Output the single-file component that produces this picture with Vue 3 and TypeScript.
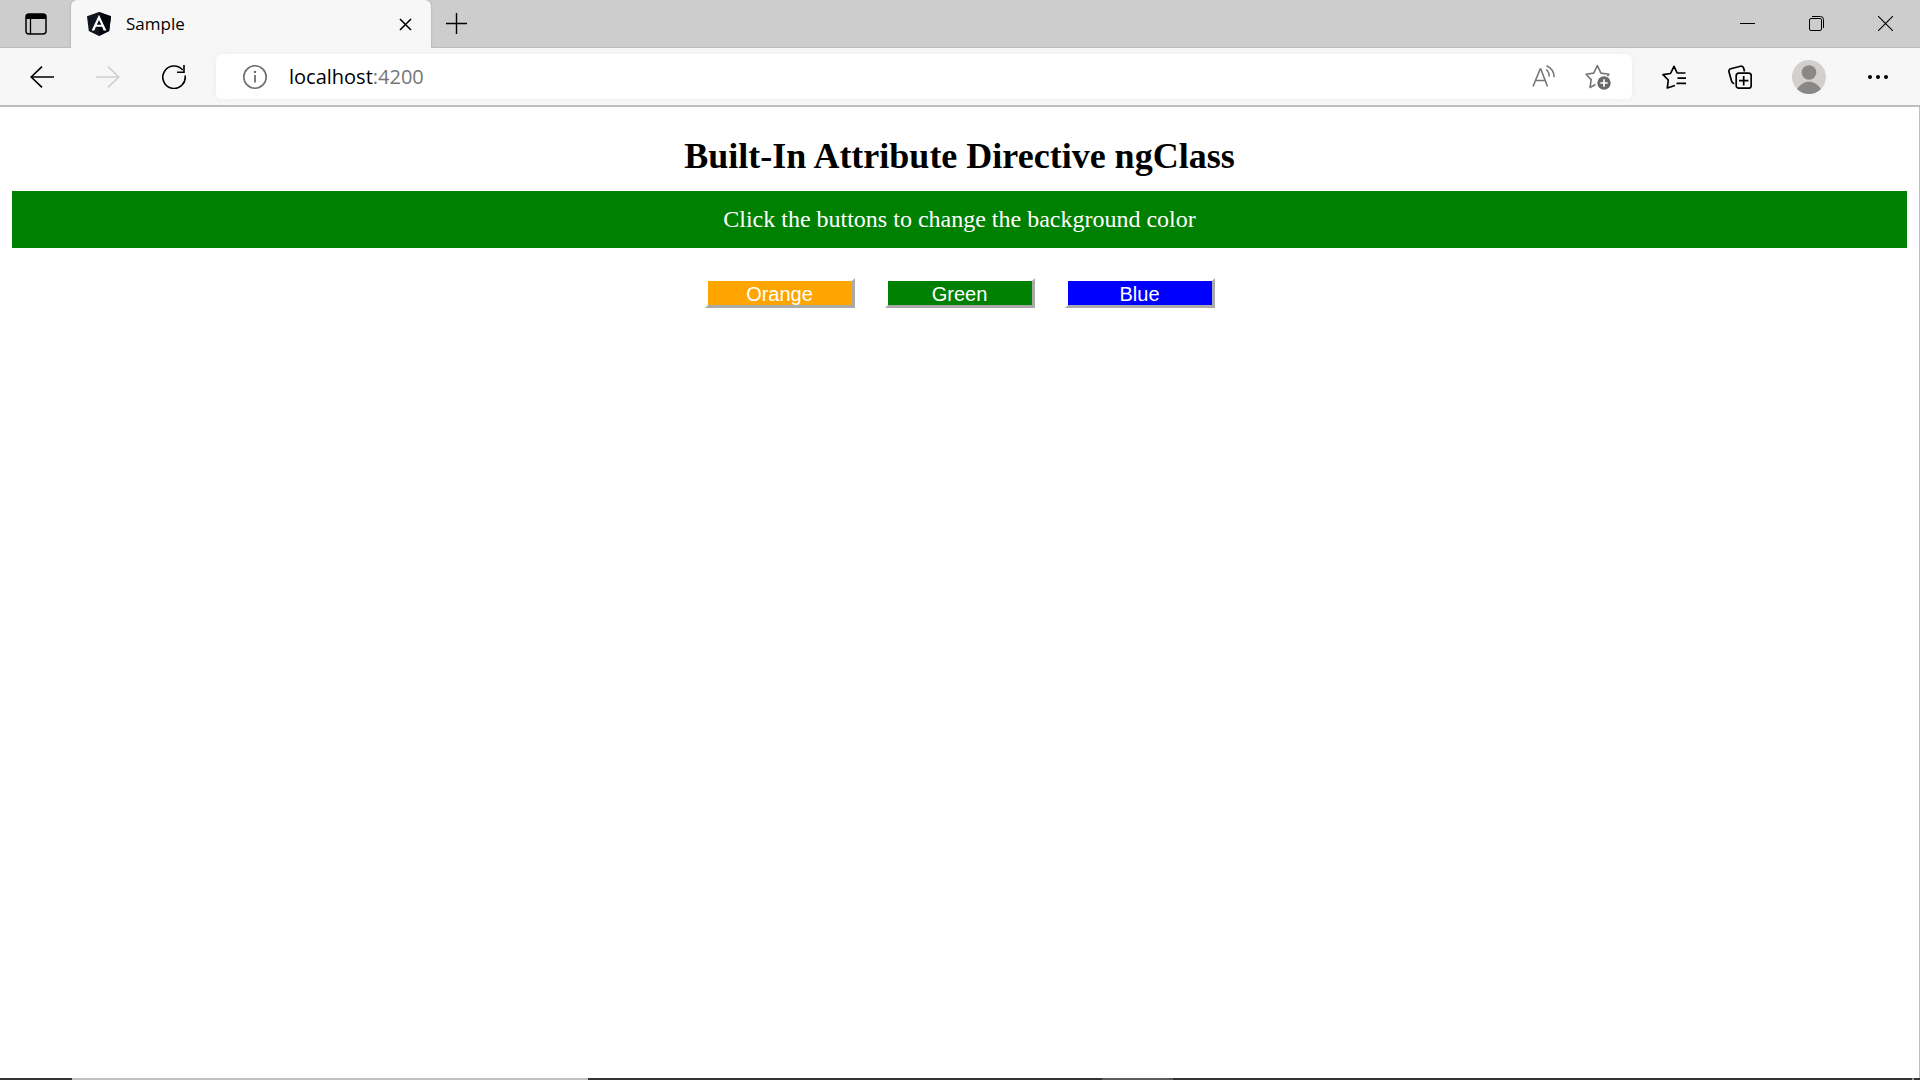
<script setup lang="ts">
import { ref } from 'vue'

type Colour = 'orange' | 'green' | 'blue'

const choices: { id: Colour; label: string }[] = [
  { id: 'orange', label: 'Orange' },
  { id: 'green', label: 'Green' },
  { id: 'blue', label: 'Blue' },
]
const current = ref<Colour>('green')
const host = ref('localhost')
</script>

<template>
  <div class="window">
    <header class="titlebar">
      <button class="tab-actions" aria-label="Tab actions">
        <svg width="22" height="22" viewBox="0 0 22 22">
          <rect x="1" y="1" width="20" height="20" rx="3" fill="none" stroke="#000" stroke-width="1.5" />
          <path d="M1 6V4a3 3 0 0 1 3-3h14a3 3 0 0 1 3 3v2z" fill="#000" />
          <path d="M5.5 6v15" stroke="#000" stroke-width="1.3" />
        </svg>
      </button>
      <div class="tab">
        <svg width="24" height="24" viewBox="0 0 24 24">
          <path d="M12 0 24 4.2 22.2 19 12 24 1.8 19 0 4.2z" fill="#10151f" />
          <path d="M12 0 24 4.2 22.2 19 12 24z" fill="#05070d" />
          <path d="M12 2.8 4.6 18.4h2.8l1.5-3.6h6.2l1.5 3.6h2.8zm0 5.2 2.3 4.7H9.8z" fill="#fff" fill-rule="evenodd" />
        </svg>
        <span class="tab-title">Sample</span>
        <button class="tab-close" aria-label="Close tab">
          <svg width="13" height="13" viewBox="0 0 13 13">
            <path d="M1 1l11 11M12 1 1 12" stroke="#000" stroke-width="1.6" />
          </svg>
        </button>
      </div>
      <button class="new-tab" aria-label="New tab">
        <svg width="21" height="21" viewBox="0 0 21 21">
          <path d="M0 10.5h21M10.5 0v21" stroke="#000" stroke-width="1.4" />
        </svg>
      </button>
      <div class="controls">
        <button class="control" aria-label="Minimize">
          <svg width="15" height="15" viewBox="0 0 15 15"><path d="M0 7.5h15" stroke="#000" /></svg>
        </button>
        <button class="control" aria-label="Restore">
          <svg width="15" height="15" viewBox="0 0 15 15" fill="none" stroke="#000">
            <rect x=".5" y="2.5" width="12" height="12" rx="1.5" />
            <path d="M3 .5h8.500a3 3 0 0 1 3 3V12" />
          </svg>
        </button>
        <button class="control" aria-label="Close">
          <svg width="15" height="15" viewBox="0 0 15 15"><path d="M0 0l15 15M15 0 0 15" stroke="#000" stroke-width="1.1" /></svg>
        </button>
      </div>
    </header>

    <nav class="toolbar">
      <button class="tool" aria-label="Back">
        <svg width="24" height="22" viewBox="0 0 24 22" fill="none" stroke="#000" stroke-width="1.6">
          <path d="M24 11H1M12 .7 1.200 11 12 21.300" />
        </svg>
      </button>
      <button class="tool" aria-label="Forward" disabled>
        <svg width="24" height="22" viewBox="0 0 24 22" fill="none" stroke="#cfcfcf" stroke-width="1.6">
          <path d="M0 11h23M12 .7 22.800 11 12 21.300" />
        </svg>
      </button>
      <button class="tool" aria-label="Refresh">
        <svg width="24" height="24" viewBox="0 0 24 24" fill="none" stroke="#000" stroke-width="1.6">
          <path d="M23.100 10.500A11.200 11.200 0 1 1 20.600 5" />
          <path d="M22 0v7.200h-7" />
        </svg>
      </button>
      <div class="address">
        <svg width="24" height="24" viewBox="0 0 24 24" fill="none" stroke="#6e6e6e">
          <circle cx="12" cy="12" r="11.200" stroke-width="1.6" />
          <path d="M12 10v7.500" stroke-width="1.8" />
          <circle cx="12" cy="7" r="1.200" fill="#6e6e6e" stroke="none" />
        </svg>
        <label class="url">
          <input v-model="host" class="host" type="text" size="9" aria-label="Address" spellcheck="false" />
          <span class="port">:4200</span>
        </label>
        <button class="inner" aria-label="Read aloud">
          <svg width="24" height="24" viewBox="0 0 24 24" fill="none" stroke="#767676" stroke-width="1.6">
            <path d="M1 21.500 8.200 4h.6L15.500 21.500M3.600 15.500h9.600" />
            <path d="M14 4.500a9 9 0 0 1 3.300 7M14.500 .8a13 13 0 0 1 7.700 11.400" />
          </svg>
        </button>
        <button class="inner" aria-label="Add to favorites">
          <svg width="26" height="26" viewBox="0 0 26 26">
            <path d="M10.500 20.500 5 23.500l1.200-7.900L1 10.300l7.700-1.200L12.400 1.500l3.500 7.600 8 1.200-1.500 2" fill="none" stroke="#767676" stroke-width="1.6" stroke-linejoin="round" />
            <circle cx="19" cy="19" r="6.700" fill="#6a6a6a" />
            <path d="M19 15.300v7.400M15.300 19h7.400" stroke="#fff" stroke-width="1.7" />
          </svg>
        </button>
      </div>
      <button class="tool" aria-label="Favorites">
        <svg width="24" height="24" viewBox="0 0 24 24" fill="none" stroke="#000" stroke-width="1.7" stroke-linejoin="round">
          <path d="M13 20.500 5.300 23l1-8L1 9.700l7.500-1.200L12 1.300l3.200 6.700h8.300M15.500 13.200h8.500M14.500 18.300h9.500" />
        </svg>
      </button>
      <button class="tool" aria-label="Collections">
        <svg width="24" height="24" viewBox="0 0 24 24" fill="none" stroke="#000" stroke-width="1.7">
          <path d="M16.500 6.500 15.600 3A2.500 2.500 0 0 0 12.500 1.200L2.700 3.800A2.500 2.500 0 0 0 1 7L3.700 16.500A2.500 2.500 0 0 0 6.300 18.300" />
          <rect x="8.200" y="8.200" width="15" height="15" rx="2.500" />
          <path d="M15.700 11v9.400M11 15.700h9.400" />
        </svg>
      </button>
      <button class="tool profile" aria-label="Profile">
        <svg width="34" height="34" viewBox="0 0 34 34">
          <circle cx="17" cy="17" r="17" fill="#d2d0ce" />
          <circle cx="17" cy="12.500" r="7.300" fill="#8a8886" />
          <path d="M5 29C8 24.300 12.300 21.700 17 21.700S26 24.300 29 29A17 17 0 0 1 5 29z" fill="#8a8886" />
        </svg>
      </button>
      <button class="tool" aria-label="Settings and more">
        <svg width="20" height="4" viewBox="0 0 20 4">
          <circle cx="2" cy="2" r="2" /><circle cx="10" cy="2" r="2" /><circle cx="18" cy="2" r="2" />
        </svg>
      </button>
    </nav>

    <main class="page">
      <h1>Built-In Attribute Directive ngClass</h1>
      <p class="banner" :class="current">Click the buttons to change the background color</p>
      <div class="choices">
        <button
          v-for="choice in choices"
          :key="choice.id"
          class="choice"
          :class="choice.id"
          @click="current = choice.id"
        >{{ choice.label }}</button>
      </div>
    </main>

    <footer class="taskbar">
      <span class="search"></span>
      <span class="active"></span>
      <span class="peek"></span>
    </footer>
  </div>
</template>

<style>
body {
  margin: 0;
}
</style>

<style scoped>
.window {
  display: flex;
  flex-direction: column;
  min-height: 100vh;
  background: #fff;
  font-family: "Open Sans", "Noto Sans", sans-serif;
}
button {
  display: flex;
  align-items: center;
  justify-content: center;
  flex: none;
  box-sizing: border-box;
  padding: 0;
  border: 0;
  background: transparent;
}
svg {
  display: block;
  flex: none;
}
.titlebar {
  display: flex;
  height: 48px;
  background: #cdcdcd;
  box-shadow: inset 0 -1px 1px #bcbcbc;
}
.tab-actions {
  width: 72px;
}
.tab {
  display: flex;
  align-items: center;
  box-sizing: border-box;
  width: 360px;
  padding: 0 15px 0 16px;
  margin-left: -1px;
  border-radius: 6px 6px 0 0;
  background: #f7f7f7;
  box-shadow: 0 0 2px #999;
  clip-path: inset(0 -3px 0 -3px);
}
.tab-title {
  flex: 1;
  margin-left: 15px;
  font-size: 17px;
  line-height: 24px;
}
.tab-close {
  width: 21px;
  height: 21px;
}
.new-tab {
  width: 51px;
  height: 47px;
}
.controls {
  display: flex;
  margin-left: auto;
}
.control {
  width: 69px;
  height: 47px;
}
.toolbar {
  display: flex;
  align-items: center;
  box-sizing: border-box;
  height: 59px;
  padding: 0 9px;
  border-bottom: 2px solid #bdbdbd;
  background: #f7f7f7;
}
.tool {
  width: 66px;
  height: 45px;
}
.profile {
  width: 72px;
}
.address {
  display: flex;
  flex: 1;
  align-items: center;
  height: 45px;
  padding: 0 7px 0 27px;
  margin: 0 9px;
  border-radius: 6px;
  background: #fff;
  box-shadow: 0 0 6px #ececec;
}
.url {
  display: flex;
  flex: 1;
  align-items: center;
  margin-left: 22px;
  font-size: 20px;
  line-height: 28px;
}
.host {
  field-sizing: content;
  padding: 0;
  border: 0;
  outline: 0;
  background: transparent;
  color: #000;
  font: inherit;
}
.port {
  color: #767676;
}
.inner {
  width: 54px;
  height: 45px;
}
.page {
  flex: 1;
  padding: 29px 12px 0;
  border-right: 1px solid #bdbdbd;
  font-family: "Liberation Serif", "Times New Roman", serif;
  text-align: center;
}
h1 {
  margin: 0 0 14px;
  font-size: 36px;
  line-height: 41px;
}
.banner {
  margin: 0;
  padding: 15px;
  color: #fff;
  font-size: 24px;
  line-height: 27px;
}
.choices {
  display: flex;
  justify-content: center;
  gap: 30px;
  margin-top: 30px;
}
.choice {
  width: 150px;
  height: 30px;
  padding-top: 2px;
  border: 3px solid;
  border-color: #fff #aaa #aaa #fff;
  background-clip: padding-box;
  color: #fff;
  font-family: "Liberation Sans", Arial, sans-serif;
  font-size: 20px;
  line-height: 22px;
}
.orange {
  background-color: orange;
}
.green {
  background-color: green;
}
.blue {
  background-color: blue;
}
.taskbar {
  display: flex;
  height: 2px;
  background: #333;
}
.search {
  width: 516px;
  margin-left: 72px;
  background: #c1c1c1;
}
.active {
  width: 71px;
  margin-left: 514px;
  background: #5c5c5c;
}
.peek {
  width: 2px;
  margin: 0 6px 0 auto;
  background: #999;
}
</style>
